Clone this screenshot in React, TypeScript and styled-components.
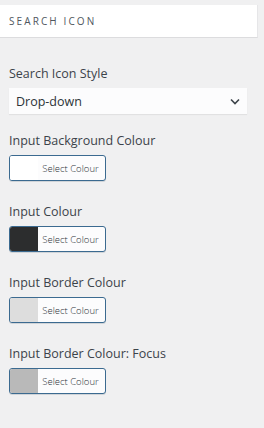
import React from "react";
import styled, { createGlobalStyle } from "styled-components";

const Global = createGlobalStyle`
  html, body { margin: 0; padding: 0; background: #f0f0f1; }
  body { font-family: "Open Sans", "Noto Sans", sans-serif; }
`;

const Panel = styled.div`
  width: 264px;
  height: 428px;
  background: #f0f0f1;
  padding-top: 5px;
  box-sizing: border-box;
`;

const Header = styled.div`
  width: 258px;
  height: 33px;
  box-sizing: border-box;
  background: #fff;
  border-bottom: 1px solid #dcdcde;
  border-right: 1px solid #e6e6e8;
  display: flex;
  align-items: center;
  padding-left: 9px;
  font-size: 10px;
  letter-spacing: 2.1px;
  color: #50575e;
  text-transform: uppercase;
`;

const Body = styled.div`
  padding: 27px 17px 0 9px;
  display: flex;
  flex-direction: column;
`;

const Field = styled.div<{ $gap?: number }>`
  display: flex;
  flex-direction: column;
  margin-bottom: ${(p) => p.$gap ?? 22}px;
`;

const Label = styled.div`
  font-size: 12.5px;
  font-weight: 500;
  line-height: 18px;
  color: #3c434a;
  margin-bottom: 5px;
`;

const Select = styled.div`
  height: 26px;
  background: #fcfcfd;
  box-shadow: 0 1px 1px rgba(0, 0, 0, 0.06);
  display: flex;
  align-items: center;
  justify-content: space-between;
  padding: 0 7px 0 7px;
  font-size: 12.5px;
  color: #2c3338;
`;

const Button = styled.div`
  width: 97px;
  height: 26px;
  box-sizing: border-box;
  border: 1px solid #3b6a90;
  border-radius: 3px;
  overflow: hidden;
  display: flex;
  background: #fcfcfd;
  box-shadow: 0 1px 0 #d0d4d8;
`;

const Swatch = styled.div<{ $c: string }>`
  width: 28px;
  background: ${(p) => p.$c};
`;

const BtnText = styled.div`
  flex: 1;
  display: flex;
  align-items: center;
  justify-content: center;
  font-size: 9.5px;
  font-weight: 300;
  color: #2c3338;
  padding-right: 2px;
`;

const Chevron = () => (
  <svg width="10" height="7" viewBox="0 0 10 7">
    <path d="M1 1.5 L5 5.5 L9 1.5" fill="none" stroke="#3c434a" strokeWidth="1.6" />
  </svg>
);

const colours: [string, string][] = [
  ["Input Background Colour", "#ffffff"],
  ["Input Colour", "#2c2d2e"],
  ["Input Border Colour", "#dddddd"],
  ["Input Border Colour: Focus", "#b9b9b9"],
];

export default function App() {
  return (
    <>
      <Global />
      <Panel>
        <Header>Search Icon</Header>
        <Body>
          <Field $gap={18}>
            <Label>Search Icon Style</Label>
            <Select>
              <span>Drop-down</span>
              <Chevron />
            </Select>
          </Field>
          {colours.map(([l, c]) => (
            <Field key={l}>
              <Label>{l}</Label>
              <Button>
                <Swatch $c={c} />
                <BtnText>Select Colour</BtnText>
              </Button>
            </Field>
          ))}
        </Body>
      </Panel>
    </>
  );
}
